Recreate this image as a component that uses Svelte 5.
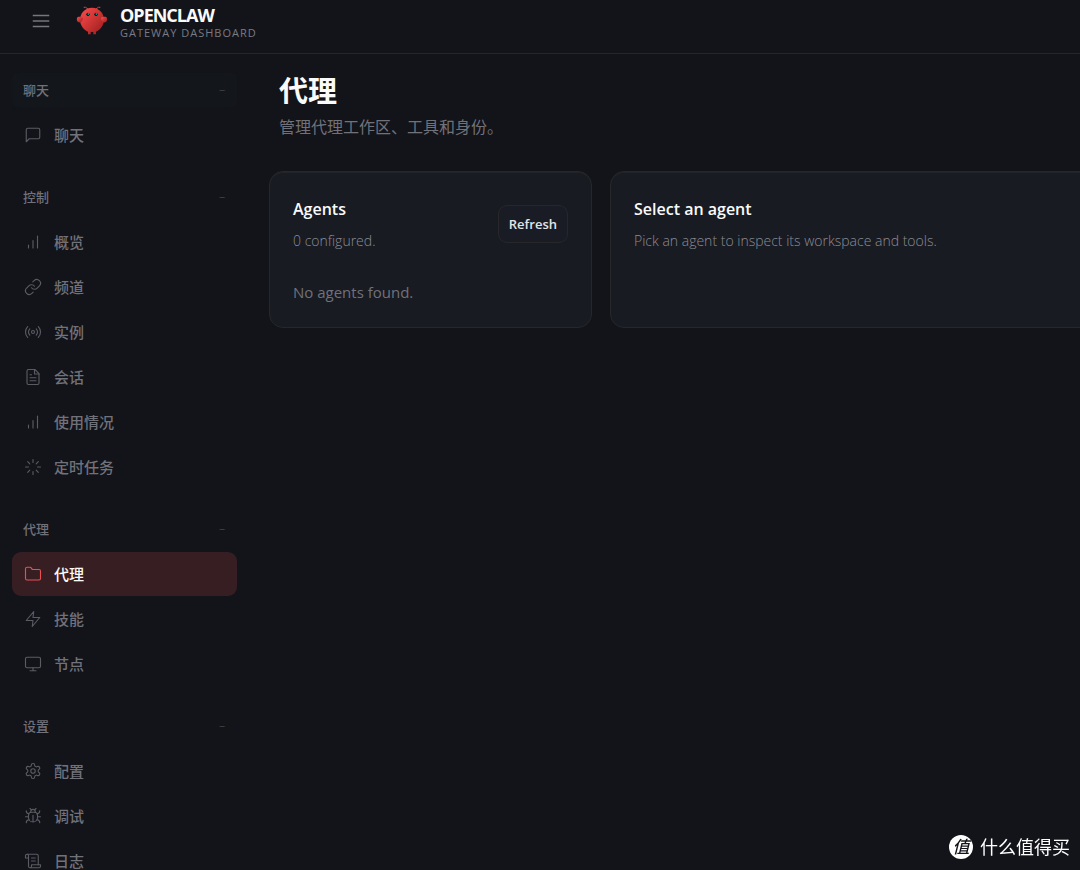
<script lang="ts">
  type IconName =
    | "message"
    | "bars"
    | "link"
    | "radio"
    | "file"
    | "loader"
    | "folder"
    | "zap"
    | "monitor"
    | "settings"
    | "bug"
    | "scroll";

  interface NavItem {
    id: string;
    label: string;
    icon: IconName;
  }

  interface NavGroup {
    id: string;
    label: string;
    items: NavItem[];
  }

  const groups: NavGroup[] = [
    {
      id: "chat-group",
      label: "聊天",
      items: [{ id: "chat", label: "聊天", icon: "message" }],
    },
    {
      id: "control-group",
      label: "控制",
      items: [
        { id: "overview", label: "概览", icon: "bars" },
        { id: "channels", label: "频道", icon: "link" },
        { id: "instances", label: "实例", icon: "radio" },
        { id: "sessions", label: "会话", icon: "file" },
        { id: "usage", label: "使用情况", icon: "bars" },
        { id: "cron", label: "定时任务", icon: "loader" },
      ],
    },
    {
      id: "agent-group",
      label: "代理",
      items: [
        { id: "agents", label: "代理", icon: "folder" },
        { id: "skills", label: "技能", icon: "zap" },
        { id: "nodes", label: "节点", icon: "monitor" },
      ],
    },
    {
      id: "settings-group",
      label: "设置",
      items: [
        { id: "config", label: "配置", icon: "settings" },
        { id: "debug", label: "调试", icon: "bug" },
        { id: "logs", label: "日志", icon: "scroll" },
      ],
    },
  ];

  let active = $state("agents");
  let navOpen = $state(true);
  let collapsed = $state<Record<string, boolean>>({});

  function toggleGroup(id: string) {
    collapsed[id] = !collapsed[id];
  }

  function select(event: MouseEvent, id: string) {
    event.preventDefault();
    active = id;
  }
</script>

{#snippet icon(name: IconName)}
  <svg class="icon" viewBox="0 0 24 24" aria-hidden="true">
    {#if name === "message"}
      <path d="M21 15a2 2 0 0 1-2 2H7l-4 4V5a2 2 0 0 1 2-2h14a2 2 0 0 1 2 2z" />
    {:else if name === "bars"}
      <path d="M12 20V10M18 20V4M6 20v-4" />
    {:else if name === "link"}
      <path d="M10 13a5 5 0 0 0 7.54.54l3-3a5 5 0 0 0-7.07-7.07l-1.72 1.71" />
      <path d="M14 11a5 5 0 0 0-7.54-.54l-3 3a5 5 0 0 0 7.07 7.07l1.71-1.71" />
    {:else if name === "radio"}
      <circle cx="12" cy="12" r="2" />
      <path d="M16.24 7.76a6 6 0 0 1 0 8.49m-8.48-.01a6 6 0 0 1 0-8.49m11.31-2.82a10 10 0 0 1 0 14.14m-14.14 0a10 10 0 0 1 0-14.14" />
    {:else if name === "file"}
      <path d="M14.5 2H6a2 2 0 0 0-2 2v16a2 2 0 0 0 2 2h12a2 2 0 0 0 2-2V7.5L14.5 2z" />
      <path d="M14 2v6h6M16 13H8M16 17H8M10 9H8" />
    {:else if name === "loader"}
      <path d="M12 2v4M12 18v4M4.93 4.93l2.83 2.83M16.24 16.24l2.83 2.83M2 12h4M18 12h4M4.93 19.07l2.83-2.83M16.24 7.76l2.83-2.83" />
    {:else if name === "folder"}
      <path d="M4 20h16a2 2 0 0 0 2-2V8a2 2 0 0 0-2-2h-7.93a2 2 0 0 1-1.66-.9l-.82-1.2A2 2 0 0 0 7.93 3H4a2 2 0 0 0-2 2v13c0 1.1.9 2 2 2z" />
    {:else if name === "zap"}
      <path d="M13 2 3 14h9l-1 8 10-12h-9z" />
    {:else if name === "monitor"}
      <rect x="2" y="3" width="20" height="14" rx="2" />
      <path d="M8 21h8M12 17v4" />
    {:else if name === "settings"}
      <path d="M12.22 2h-.44a2 2 0 0 0-2 2v.18a2 2 0 0 1-1 1.73l-.43.25a2 2 0 0 1-2 0l-.15-.08a2 2 0 0 0-2.73.73l-.22.38a2 2 0 0 0 .73 2.73l.15.1a2 2 0 0 1 1 1.72v.51a2 2 0 0 1-1 1.74l-.15.09a2 2 0 0 0-.73 2.73l.22.38a2 2 0 0 0 2.73.73l.15-.08a2 2 0 0 1 2 0l.43.25a2 2 0 0 1 1 1.73V20a2 2 0 0 0 2 2h.44a2 2 0 0 0 2-2v-.18a2 2 0 0 1 1-1.73l.43-.25a2 2 0 0 1 2 0l.15.08a2 2 0 0 0 2.73-.73l.22-.39a2 2 0 0 0-.73-2.73l-.15-.08a2 2 0 0 1-1-1.74v-.5a2 2 0 0 1 1-1.74l.15-.09a2 2 0 0 0 .73-2.73l-.22-.38a2 2 0 0 0-2.73-.73l-.15.08a2 2 0 0 1-2 0l-.43-.25a2 2 0 0 1-1-1.73V4a2 2 0 0 0-2-2z" />
      <circle cx="12" cy="12" r="3" />
    {:else if name === "bug"}
      <path d="m8 2 1.88 1.88M14.12 3.88 16 2M9 7.13v-1a3 3 0 1 1 6 0v1" />
      <path d="M12 20c-3.3 0-6-2.7-6-6v-3a4 4 0 0 1 4-4h4a4 4 0 0 1 4 4v3c0 3.3-2.7 6-6 6M12 20v-9" />
      <path d="M6.53 9C4.6 8.8 3 7.1 3 5M6 13H2M3 21c0-2.1 1.7-3.9 3.8-4M20.97 5c0 2.1-1.6 3.8-3.5 4M22 13h-4M17.2 17c2.1.1 3.8 1.9 3.8 4" />
    {:else}
      <path d="M8 21h12a2 2 0 0 0 2-2v-2H10v2a2 2 0 1 1-4 0V5a2 2 0 1 0-4 0v3h4" />
      <path d="M19 17V5a2 2 0 0 0-2-2H4M15 8h-5M15 12h-5" />
    {/if}
  </svg>
{/snippet}

<div class="shell">
  <header class="topbar">
    <button
      class="menu-btn"
      aria-label="Toggle navigation"
      aria-expanded={navOpen}
      onclick={() => (navOpen = !navOpen)}
    >
      <svg viewBox="0 0 24 24" aria-hidden="true">
        <path d="M3 6h18M3 12h18M3 18h18" />
      </svg>
    </button>

    <div class="brand">
      <svg class="brand-logo" viewBox="0 0 120 120" aria-hidden="true">
        <defs>
          <linearGradient id="claw-red" x1="0%" y1="0%" x2="100%" y2="100%">
            <stop offset="0%" stop-color="#ff4d4d" />
            <stop offset="100%" stop-color="#991b1b" />
          </linearGradient>
        </defs>
        <path
          fill="url(#claw-red)"
          d="M60 10C30 10 15 35 15 55s15 40 30 45v10h10v-10s5 2 10 0v10h10v-10c15-5 30-25 30-45S90 10 60 10Z"
        />
        <path fill="url(#claw-red)" d="M20 45C5 40 0 50 5 60s15 5 20-5c3-7 0-10-5-10Z" />
        <path fill="url(#claw-red)" d="M100 45c15-5 20 5 15 15s-15 5-20-5c-3-7 0-10 5-10Z" />
        <path class="antenna" d="M45 15Q35 5 30 8M75 15Q85 5 90 8" />
        <circle cx="45" cy="35" r="6" fill="#050810" />
        <circle cx="75" cy="35" r="6" fill="#050810" />
        <circle cx="46" cy="34" r="3" fill="#00e5cc" />
        <circle cx="76" cy="34" r="3" fill="#00e5cc" />
      </svg>
      <div class="brand-text">
        <div class="brand-title">OPENCLAW</div>
        <div class="brand-sub">GATEWAY DASHBOARD</div>
      </div>
    </div>
  </header>

  <div class="body">
    {#if navOpen}
      <nav class="sidebar">
        {#each groups as group, i (group.id)}
          <section class="nav-group">
            <button
              class="nav-label"
              class:hovered={i === 0}
              aria-expanded={!collapsed[group.id]}
              onclick={() => toggleGroup(group.id)}
            >
              <span>{group.label}</span>
              <span class="chevron">{collapsed[group.id] ? "+" : "−"}</span>
            </button>
            {#if !collapsed[group.id]}
              <div class="nav-items">
                {#each group.items as item (item.id)}
                  <a
                    href="#{item.id}"
                    class="nav-item"
                    class:active={active === item.id}
                    aria-current={active === item.id ? "page" : undefined}
                    onclick={(e) => select(e, item.id)}
                  >
                    {@render icon(item.icon)}
                    <span>{item.label}</span>
                  </a>
                {/each}
              </div>
            {/if}
          </section>
        {/each}
      </nav>
    {/if}

    <main class="content">
      <div class="page-head">
        <h1>代理</h1>
        <p>管理代理工作区、工具和身份。</p>
      </div>

      <div class="agents-layout">
        <section class="card">
          <div class="card-head">
            <div>
              <h2>Agents</h2>
              <p class="card-sub">0 configured.</p>
            </div>
            <button class="btn">Refresh</button>
          </div>
          <p class="empty">No agents found.</p>
        </section>

        <section class="card">
          <h2>Select an agent</h2>
          <p class="card-sub">Pick an agent to inspect its workspace and tools.</p>
        </section>
      </div>
    </main>
  </div>

  <div class="watermark">
    <span class="watermark-badge">值</span>
    <span>什么值得买</span>
  </div>
</div>

<style>
  :global(body) {
    margin: 0;
    background: #12141a;
  }

  .shell {
    display: flex;
    flex-direction: column;
    height: 100vh;
    overflow: hidden;
    color: #fafafa;
    background: #12141a;
    font-family: "Open Sans", "Noto Sans CJK SC", sans-serif;
    font-size: 15px;
  }

  h1,
  h2,
  p {
    margin: 0;
  }

  button {
    font-family: inherit;
    cursor: pointer;
  }

  .topbar {
    display: flex;
    flex: none;
    align-items: center;
    gap: 16px;
    box-sizing: border-box;
    height: 54px;
    padding: 0 22px 11px;
    border-bottom: 1px solid #27272a;
  }

  .menu-btn {
    display: grid;
    place-items: center;
    width: 38px;
    height: 38px;
    padding: 0;
    border: none;
    border-radius: 8px;
    background: none;
  }

  .menu-btn svg {
    width: 22px;
    height: 22px;
    fill: none;
    stroke: #76767b;
    stroke-width: 1.5;
  }

  .brand {
    display: flex;
    align-items: center;
    gap: 12px;
  }

  .brand-logo {
    width: 32px;
    height: 32px;
  }

  .antenna {
    fill: none;
    stroke: #ff4d4d;
    stroke-width: 3;
    stroke-linecap: round;
  }

  .brand-text {
    padding-top: 3px;
  }

  .brand-title {
    font-size: 18px;
    font-weight: 700;
    line-height: 20px;
    letter-spacing: -1px;
  }

  .brand-sub {
    color: #7a7a83;
    font-size: 11px;
    font-weight: 500;
    line-height: 15px;
    letter-spacing: 1px;
  }

  .body {
    display: flex;
    flex: 1;
    min-height: 0;
  }

  .sidebar {
    display: flex;
    flex: none;
    flex-direction: column;
    gap: 23px;
    box-sizing: border-box;
    width: 249px;
    padding: 19px 12px;
    overflow: hidden;
    line-height: 20px;
  }

  .nav-group {
    display: flex;
    flex: none;
    flex-direction: column;
    gap: 6px;
  }

  .nav-label {
    display: flex;
    align-items: center;
    justify-content: space-between;
    height: 34px;
    padding: 0 12px 0 11px;
    border: none;
    border-radius: 6px;
    background: none;
    color: #71717a;
    font-size: 13px;
    font-weight: 500;
    line-height: 20px;
  }

  .nav-label.hovered,
  .nav-label:hover {
    background: #13171b;
  }

  .chevron {
    color: #45464c;
    font-size: 11px;
  }

  .nav-items {
    display: flex;
    flex-direction: column;
    gap: 1px;
  }

  .nav-item {
    display: flex;
    align-items: center;
    gap: 12px;
    box-sizing: border-box;
    height: 44px;
    padding: 0 12px;
    border-radius: 9px;
    color: #71717a;
    font-weight: 500;
    text-decoration: none;
  }

  .nav-item:hover {
    background: #1a1d25;
  }

  .icon {
    flex: none;
    width: 18px;
    height: 18px;
    fill: none;
    stroke: #5b5b63;
    stroke-width: 1.5;
    stroke-linecap: round;
    stroke-linejoin: round;
  }

  .nav-item.active {
    background: #371e23;
    color: #fafafa;
  }

  .nav-item.active .icon {
    stroke: #e85052;
  }

  .content {
    flex: 1;
    min-width: 0;
    padding: 16px 20px;
    overflow: hidden;
  }

  .page-head {
    padding: 0 10px;
  }

  .page-head h1 {
    font-size: 29px;
    font-weight: 700;
    line-height: 42px;
  }

  .page-head p {
    margin-top: 3px;
    color: #71717a;
    font-size: 16px;
    line-height: 24px;
  }

  /* The detail column keeps its width and runs past narrow windows. */
  .agents-layout {
    display: grid;
    grid-template-columns: 323px minmax(560px, 1fr);
    gap: 18px;
    margin-top: 32px;
  }

  .card {
    box-sizing: border-box;
    padding: 24px 23px 22px;
    border: 1px solid #27272a;
    border-radius: 14px;
    background: #181b22;
    box-shadow: inset 0 1px 0 #222429;
  }

  .card-head {
    display: flex;
    align-items: center;
    justify-content: space-between;
  }

  .card h2 {
    font-size: 16px;
    font-weight: 600;
    line-height: 26px;
  }

  .card-sub {
    margin-top: 8px;
    color: #8c8c96;
    font-size: 14px;
    font-weight: 300;
    line-height: 22px;
  }

  .btn {
    height: 38px;
    padding: 0 10px;
    border: 1px solid #27272a;
    border-radius: 9px;
    background: #191c24;
    color: #e4e4e7;
    font-size: 13px;
    font-weight: 600;
    line-height: 18px;
  }

  .empty {
    margin-top: 27px;
    color: #71717a;
    font-size: 15px;
    line-height: 26px;
  }

  .watermark {
    position: fixed;
    right: 10px;
    bottom: 11px;
    display: flex;
    align-items: center;
    gap: 7px;
    color: #fff;
    font-size: 18px;
    line-height: 24px;
  }

  .watermark-badge {
    width: 24px;
    height: 24px;
    border-radius: 50%;
    background: #fff;
    color: #12141a;
    font-size: 17px;
    font-style: italic;
    font-weight: 500;
    text-align: center;
  }
</style>
